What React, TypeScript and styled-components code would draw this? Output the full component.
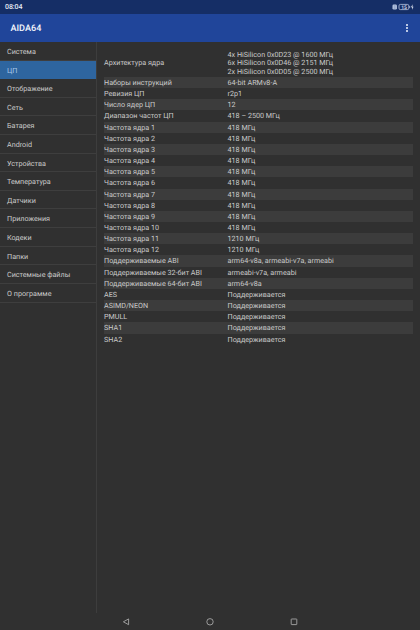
import React from "react";
import styled, { createGlobalStyle } from "styled-components";

const GlobalStyle = createGlobalStyle`
  * { box-sizing: border-box; }
  body { margin: 0; background: #303030; }
`;

const Screen = styled.div`
  width: 420px;
  height: 630px;
  display: flex;
  flex-direction: column;
  background: #303030;
  color: #cbcbcb;
  font-family: Roboto, "Noto Sans", sans-serif;
  font-size: 7.2px;
  text-rendering: geometricPrecision;
  overflow: hidden;
`;

const StatusBar = styled.div`
  height: 14px;
  flex: none;
  display: flex;
  align-items: center;
  justify-content: space-between;
  padding: 0 6px 0 5px;
  background: #152e66;
  color: #e6ebf5;
  font-size: 7px;
  font-weight: 500;
  line-height: 15px;
  letter-spacing: -0.1px;
`;

const AppBar = styled.header`
  height: 28px;
  flex: none;
  display: flex;
  align-items: center;
  justify-content: space-between;
  padding: 0 11px 0 10.5px;
  background: #20459a;
`;

const Title = styled.h1`
  margin: 0;
  padding-top: 2px;
  color: #f3f6fc;
  font-size: 9.1px;
  line-height: 28px;
  font-weight: 500;
`;

const Body = styled.div`
  height: 571px;
  flex: none;
  display: flex;
`;

const Sidebar = styled.nav`
  width: 97px;
  flex: none;
  border-right: 1px solid #3d3d3d;
`;

const NavItem = styled.div<{ $active?: boolean }>`
  height: 18.62px;
  padding-left: 7px;
  line-height: 19px;
  border-bottom: 1px solid ${(p) => (p.$active ? "#2e659f" : "#3e3e3e")};
  background: ${(p) => (p.$active ? "#2e659f" : "transparent")};
  color: ${(p) => (p.$active ? "#a9c8e8" : "#cbcbcb")};
`;

const Details = styled.main`
  flex: 1;
  padding: 8.2px 7px 0 7px;
`;

const Row = styled.div<{ $striped: boolean; $tall?: boolean }>`
  display: grid;
  grid-template-columns: 123.5px 1fr;
  align-items: center;
  height: ${(p) => (p.$tall ? "26.8px" : "11.17px")};
  line-height: ${(p) => (p.$tall ? "8.4px" : "11.6px")};
  background: ${(p) => (p.$striped ? "#3c3c3c" : "transparent")};
  white-space: pre-line;
`;

const NavBar = styled.footer`
  height: 17px;
  flex: none;
  display: grid;
  grid-template-columns: repeat(3, 84px);
  justify-content: center;
  justify-items: center;
  align-items: center;
`;

const sections = [
  "Система", "ЦП", "Отображение", "Сеть", "Батарея", "Android", "Устройства",
  "Температура", "Датчики", "Приложения", "Кодеки", "Папки", "Системные файлы", "О программе",
];

const frequencies = Array.from({ length: 12 }, (_, i) => [
  `Частота ядра ${i + 1}`,
  i < 10 ? "418 МГц" : "1210 МГц",
]);

const rows = [
  ["Архитектура ядра", "4x HiSilicon 0x0D23 @ 1600 МГц\n6x HiSilicon 0x0D46 @ 2151 МГц\n2x HiSilicon 0x0D05 @ 2500 МГц"],
  ["Наборы инструкций", "64-bit ARMv8-A"],
  ["Ревизия ЦП", "r2p1"],
  ["Число ядер ЦП", "12"],
  ["Диапазон частот ЦП", "418 – 2500 МГц"],
  ...frequencies,
  ["Поддерживаемые ABI", "arm64-v8a, armeabi-v7a, armeabi"],
  ["Поддерживаемые 32-бит ABI", "armeabi-v7a, armeabi"],
  ["Поддерживаемые 64-бит ABI", "arm64-v8a"],
  ["AES", "Поддерживается"],
  ["ASIMD/NEON", "Поддерживается"],
  ["PMULL", "Поддерживается"],
  ["SHA1", "Поддерживается"],
  ["SHA2", "Поддерживается"],
];

const StatusIcons = () => (
  <svg width="22" height="8" viewBox="0 0 22 8">
    <rect x="0.5" y="1.5" width="4.4" height="5" rx="1.3" fill="#b9c7e2" />
    <path d="M1.7 3h2M1.7 5h2" stroke="#6078a8" strokeWidth="0.7" />
    <rect x="7" y="1.4" width="9.8" height="5.2" rx="1.4" fill="none" stroke="#b9c7e2" strokeWidth="0.8" />
    <path d="M17.7 3v2" stroke="#b9c7e2" strokeWidth="0.8" />
    <text x="12" y="5.9" textAnchor="middle" fontSize="5" fontWeight="600" fill="#d5dfef">15</text>
    <path d="M20.6 1.3 19 4.3h1.2L20 6.8l1.5-3h-1.1z" fill="#e6ebf5" />
  </svg>
);

const MoreIcon = () => (
  <svg width="4" height="10" viewBox="0 0 4 10" fill="#eef3fc">
    <circle cx="2" cy="2" r="1" />
    <circle cx="2" cy="5" r="1" />
    <circle cx="2" cy="8" r="1" />
  </svg>
);

export default function App() {
  return (
    <>
      <GlobalStyle />
      <Screen>
        <StatusBar>
          <span>08:04</span>
          <StatusIcons />
        </StatusBar>
        <AppBar>
          <Title>AIDA64</Title>
          <MoreIcon />
        </AppBar>
        <Body>
          <Sidebar>
            {sections.map((name) => (
              <NavItem key={name} $active={name === "ЦП"}>{name}</NavItem>
            ))}
          </Sidebar>
          <Details>
            {rows.map(([label, value], i) => (
              <Row key={label} $striped={i % 2 === 1} $tall={i === 0}>
                <span>{label}</span>
                <span>{value}</span>
              </Row>
            ))}
          </Details>
        </Body>
        <NavBar>
          <svg width="8" height="8" viewBox="0 0 8 8" fill="none" stroke="#b5b5b5" strokeWidth="0.8">
            <path d="M6.6 0.9v5.8L1.4 3.8z" strokeLinejoin="round" />
          </svg>
          <svg width="8" height="8" viewBox="0 0 8 8" fill="none" stroke="#b5b5b5" strokeWidth="0.8">
            <circle cx="4" cy="3.8" r="3.2" />
          </svg>
          <svg width="8" height="8" viewBox="0 0 8 8" fill="none" stroke="#b5b5b5" strokeWidth="0.8">
            <rect x="1.2" y="1" width="5.6" height="5.6" rx="0.4" />
          </svg>
        </NavBar>
      </Screen>
    </>
  );
}
